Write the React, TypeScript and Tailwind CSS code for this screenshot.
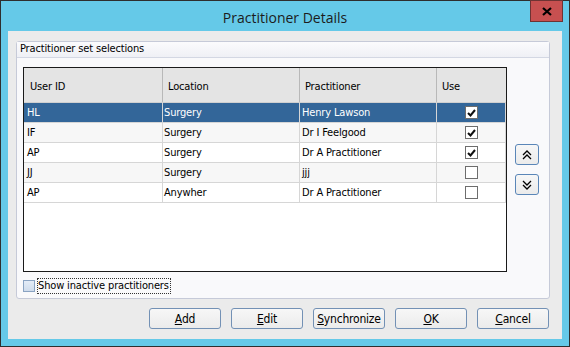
import React from "react";

const F = { fontFamily: '"DejaVu Sans Condensed", "DejaVu Sans", sans-serif' };

const rows = [
  { id: "HL", loc: "Surgery", pr: "Henry Lawson", use: true, sel: true },
  { id: "IF", loc: "Surgery", pr: "Dr I Feelgood", use: true, sel: false },
  { id: "AP", loc: "Surgery", pr: "Dr A Practitioner", use: true, sel: false },
  { id: "JJ", loc: "Surgery", pr: "jjj", use: false, sel: false },
  { id: "AP", loc: "Anywher", pr: "Dr A Practitioner", use: false, sel: false },
];

function Check({ checked }: { checked: boolean }) {
  return (
    <div className="w-[13px] h-[13px] border border-[#6d6d6d] bg-white flex items-center justify-center">
      {checked && (
        <svg width="9" height="8" viewBox="0 0 9 8">
          <path d="M1 4 L3.5 6.5 L8 1" stroke="#111" strokeWidth="2" fill="none" />
        </svg>
      )}
    </div>
  );
}

function Btn({ pre, u, post }: { pre?: string; u: string; post: string }) {
  return (
    <div className="w-[72px] h-[21px] border border-[#7391b5] rounded-[3px] bg-gradient-to-b from-[#f7f7f7] to-[#ebebeb] flex items-center justify-center text-[12px] text-black tracking-[-0.2px]">
      {pre}
      <span className="underline">{u}</span>
      {post}
    </div>
  );
}

function ArrowBtn({ up }: { up: boolean }) {
  return (
    <div className="w-[24px] h-[21px] border border-[#5a86b8] rounded-[3px] bg-gradient-to-b from-[#f7f7f7] to-[#ebebeb] flex items-center justify-center">
      <svg width="10" height="10" viewBox="0 0 10 10">
        {up ? (
          <path d="M1 5 L5 1 L9 5 M1 9 L5 5 L9 9" stroke="#000" strokeWidth="1.3" fill="none" />
        ) : (
          <path d="M1 1 L5 5 L9 1 M1 5 L5 9 L9 5" stroke="#000" strokeWidth="1.3" fill="none" />
        )}
      </svg>
    </div>
  );
}

export default function App() {
  return (
    <div className="w-[570px] h-[347px] bg-[#65c9e8] border border-[#2e2e2e] flex flex-col" style={F}>
      <div className="h-[30px] relative flex items-center justify-center">
        <span className="text-[14px] text-[#1c1c1c] pt-[2px]" style={{ fontFamily: '"Open Sans", sans-serif' }}>
          Practitioner Details
        </span>
        <div className="absolute top-[-1px] right-[6px] w-[33px] h-[22px] bg-[#c75050] border border-[#6e3333] flex items-center justify-center">
          <svg width="10" height="9" viewBox="0 0 10 9">
            <path d="M1 1 L9 8 M9 1 L1 8" stroke="#000" strokeWidth="2.2" />
          </svg>
        </div>
      </div>
      <div className="mx-[7px] h-[308px] bg-[#ebebeb] flex flex-col pl-[8px] pt-[10px] pr-[13px] tracking-[-0.15px]">
        <div className="w-[534px] h-[258px] border border-[#c6cad8] rounded-[3px] bg-[#f9f9fb] flex flex-col">
          <div className="h-[16px] border-b border-[#d3d7e3] bg-gradient-to-b from-[#fbfbfd] to-[#eff0f5] flex items-center pl-[3px] text-[11px] text-black">
            Practitioner set selections
          </div>
          <div className="flex pl-[6px] pt-[9px]">
            <div className="w-[484px] h-[205px] border border-[#1a1a1a] bg-white flex flex-col text-[11px]">
              <div className="h-[35px] flex bg-[#e4e4e4] border-b border-[#d0d0d0]">
                {[
                  ["User ID", "w-[139px]"],
                  ["Location", "w-[137px]"],
                  ["Practitioner", "w-[137px]"],
                  ["Use", "w-[69px]"],
                ].map(([t, w], i) => (
                  <div key={i} className={`${w} flex items-center ${i < 3 ? "border-r border-r-[#b8b8b8]" : ""}`}>
                    <span className={`pl-[5px] pt-[4px] ${i === 0 ? "pl-[6px]" : ""}`}>{t}</span>
                  </div>
                ))}
              </div>
              {rows.map((r, i) => (
                <div
                  key={i}
                  className={`h-[20px] flex border-b border-[#d6d6d6] ${r.sel ? "bg-[#336699] text-white" : i % 2 === 1 ? "bg-[#f7f7f7] text-black" : "bg-white text-black"}`}
                >
                  <div className="w-[139px] border-r border-[#d6d6d6] flex items-center pl-[3px] pt-[2px]">{r.id}</div>
                  <div className="w-[137px] border-r border-[#d6d6d6] flex items-center pl-[1px] pt-[2px]">{r.loc}</div>
                  <div className="w-[137px] border-r border-[#d6d6d6] flex items-center pl-[2px] pt-[2px]">{r.pr}</div>
                  <div className="w-[69px] border-r border-[#d6d6d6] flex items-center justify-center">
                    <Check checked={r.use} />
                  </div>
                </div>
              ))}
            </div>
            <div className="ml-[8px] pt-[77px] flex flex-col gap-[9px]">
              <ArrowBtn up />
              <ArrowBtn up={false} />
            </div>
          </div>
          <div className="flex items-center pl-[6px] pt-[6px]">
            <div className="w-[12px] h-[12px] border border-[#8aa3c2] bg-gradient-to-b from-[#e4ecf7] to-[#cfdcec]" />
            <div className="ml-[2px] h-[16px] border border-dotted border-[#333] flex items-center pr-[1px] pt-[1px] text-[11px]">
              Show inactive practitioners
            </div>
          </div>
        </div>
        <div className="flex justify-end gap-[10px] pt-[9px]">
          <Btn u="A" post="dd" />
          <Btn u="E" post="dit" />
          <Btn u="S" post="ynchronize" />
          <Btn u="O" post="K" />
          <Btn u="C" post="ancel" />
        </div>
      </div>
    </div>
  );
}
